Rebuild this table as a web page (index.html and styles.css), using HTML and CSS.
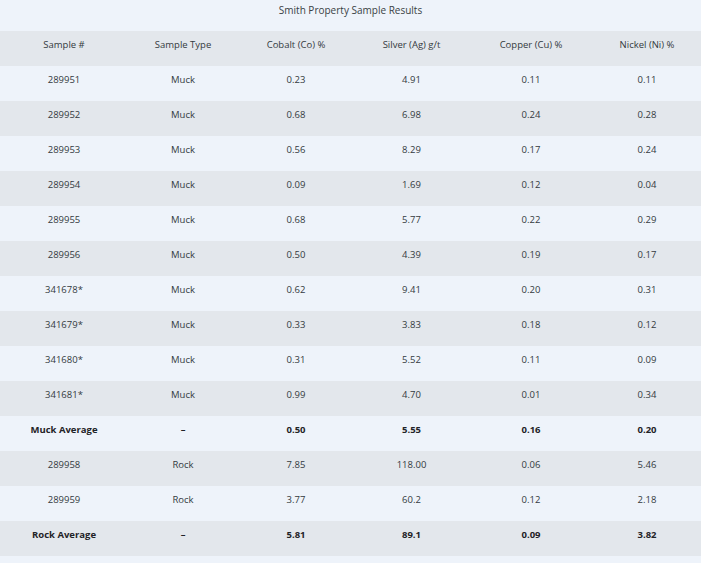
FILE: index.html
```html
<!DOCTYPE html>
<html lang="en">
<head>
<meta charset="utf-8">
<title>Smith Property Sample Results</title>
<link rel="stylesheet" href="styles.css">
</head>
<body>
<table class="results">
  <caption class="results-title">Smith Property Sample Results</caption>
  <colgroup>
    <col class="c1"><col class="c2"><col class="c3"><col class="c4"><col class="c5"><col class="c6">
  </colgroup>
  <thead>
    <tr class="row-alt">
      <th>Sample #</th><th>Sample Type</th><th>Cobalt (Co) %</th><th>Silver (Ag) g/t</th><th>Copper (Cu) %</th><th>Nickel (Ni) %</th>
    </tr>
  </thead>
  <tbody>
    <tr><td>289951</td><td>Muck</td><td>0.23</td><td>4.91</td><td>0.11</td><td>0.11</td></tr>
    <tr class="row-alt"><td>289952</td><td>Muck</td><td>0.68</td><td>6.98</td><td>0.24</td><td>0.28</td></tr>
    <tr><td>289953</td><td>Muck</td><td>0.56</td><td>8.29</td><td>0.17</td><td>0.24</td></tr>
    <tr class="row-alt"><td>289954</td><td>Muck</td><td>0.09</td><td>1.69</td><td>0.12</td><td>0.04</td></tr>
    <tr><td>289955</td><td>Muck</td><td>0.68</td><td>5.77</td><td>0.22</td><td>0.29</td></tr>
    <tr class="row-alt"><td>289956</td><td>Muck</td><td>0.50</td><td>4.39</td><td>0.19</td><td>0.17</td></tr>
    <tr><td>341678*</td><td>Muck</td><td>0.62</td><td>9.41</td><td>0.20</td><td>0.31</td></tr>
    <tr class="row-alt"><td>341679*</td><td>Muck</td><td>0.33</td><td>3.83</td><td>0.18</td><td>0.12</td></tr>
    <tr><td>341680*</td><td>Muck</td><td>0.31</td><td>5.52</td><td>0.11</td><td>0.09</td></tr>
    <tr class="row-alt"><td>341681*</td><td>Muck</td><td>0.99</td><td>4.70</td><td>0.01</td><td>0.34</td></tr>
    <tr class="row-avg"><td>Muck Average</td><td>–</td><td>0.50</td><td>5.55</td><td>0.16</td><td>0.20</td></tr>
    <tr class="row-alt"><td>289958</td><td>Rock</td><td>7.85</td><td>118.00</td><td>0.06</td><td>5.46</td></tr>
    <tr><td>289959</td><td>Rock</td><td>3.77</td><td>60.2</td><td>0.12</td><td>2.18</td></tr>
    <tr class="row-alt row-avg"><td>Rock Average</td><td>–</td><td>5.81</td><td>89.1</td><td>0.09</td><td>3.82</td></tr>
  </tbody>
</table>
</body>
</html>
```
FILE: styles.css
```css
html, body {
  margin: 0;
  padding: 0;
  background: #eef3fa;
}
body {
  font-family: "Open Sans", "Liberation Sans", sans-serif;
  font-size: 9.5px;
  color: #333a40;
}
.results {
  width: 701px;
  border-collapse: collapse;
  table-layout: fixed;
}
.results-title {
  height: 31px;
  box-sizing: border-box;
  padding-top: 4px;
  line-height: 12px;
  font-size: 10px;
  color: #3a3f44;
  text-align: center;
}
.c1 { width: 128px; }
.c2 { width: 110px; }
.c3 { width: 116px; }
.c4 { width: 115px; }
.c5 { width: 124px; }
.c6 { width: 108px; }
.results th,
.results td {
  height: 35px;
  box-sizing: border-box;
  padding: 8px 0 16px;
  line-height: 11px;
  text-align: center;
  vertical-align: top;
  font-weight: 400;
  white-space: nowrap;
}
.results tr {
  background: #eef3fa;
}
.results tr.row-alt {
  background: #e3e7ec;
}
.results tr.row-avg td {
  font-weight: 700;
  color: #1f2327;
}
```
